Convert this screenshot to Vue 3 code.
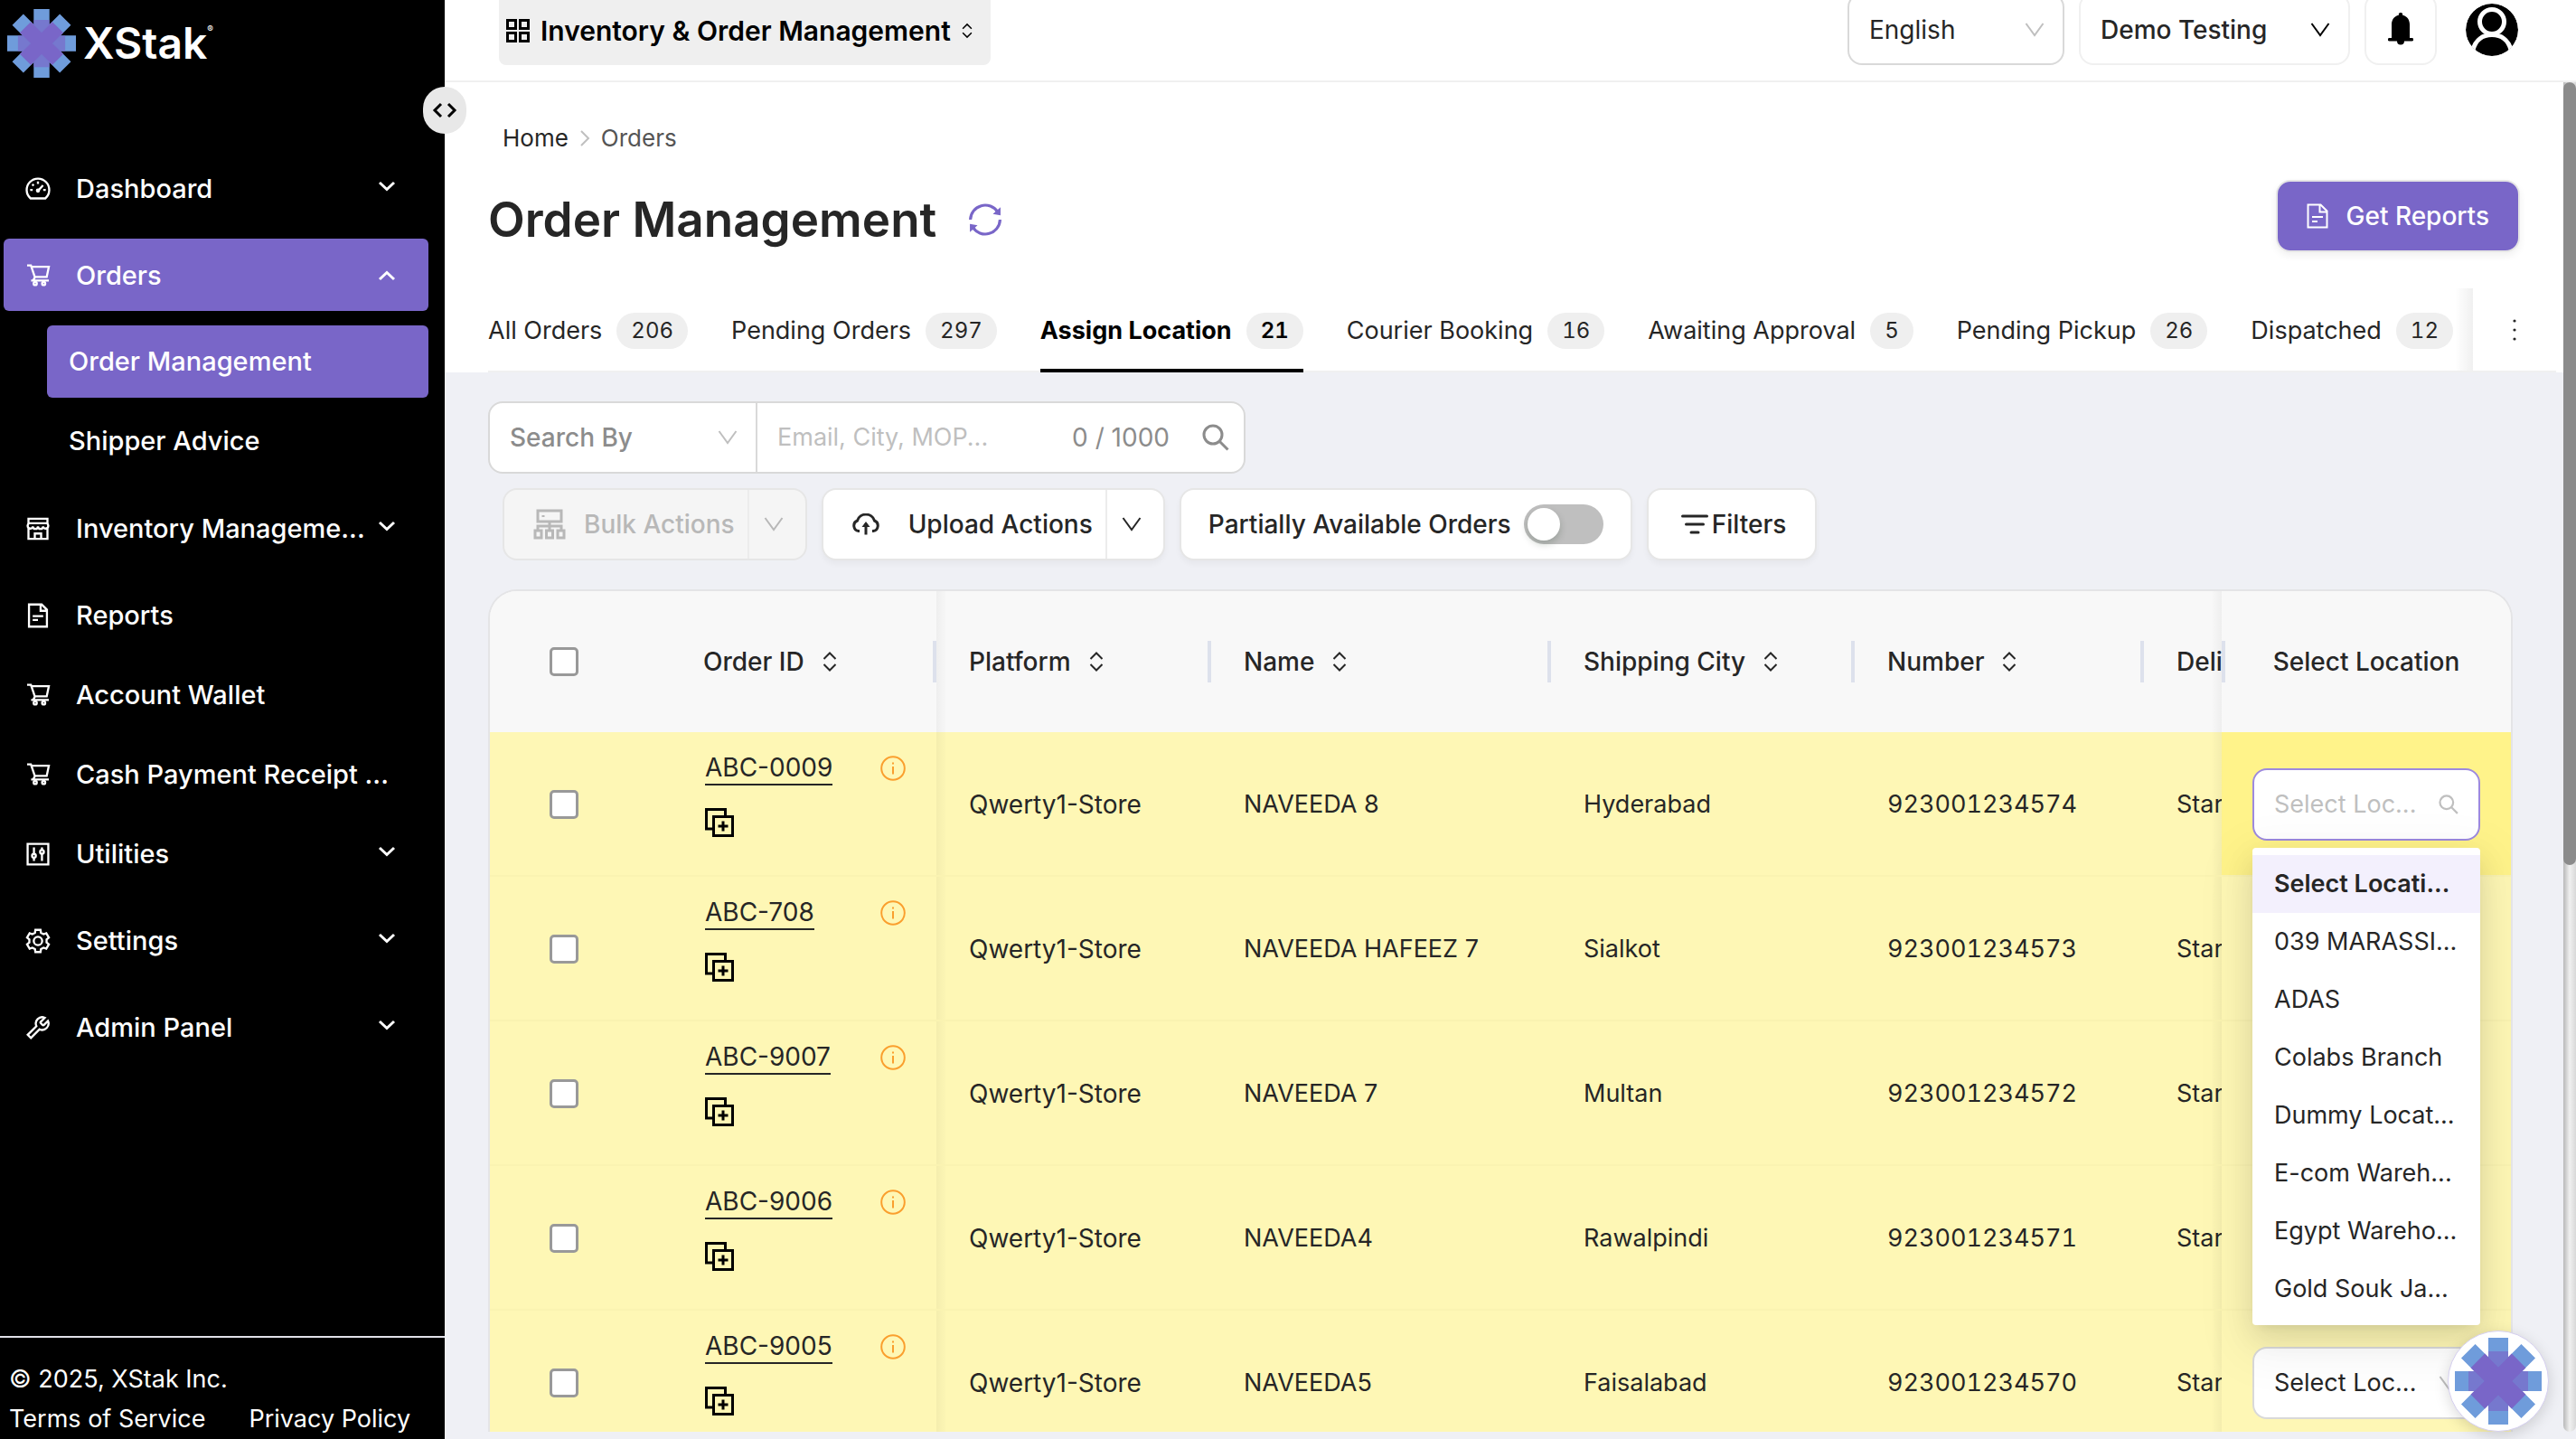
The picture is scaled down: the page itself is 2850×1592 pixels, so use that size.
<template>
  <div class="layout">
    <!-- Icon sprite -->
    <svg class="sprite" aria-hidden="true">
      <symbol id="i-dashboard" viewBox="0 0 24 24">
        <path d="M5 21a10.7 10.7 0 1 1 14 0z M12 5v2.2 M6.6 7.6l1.4 1.4 M4.6 13h2.4 M17 13h2.4 M12.2 13.6l4.6-5" />
        <circle cx="12" cy="13.6" r="1" />
      </symbol>
      <symbol id="i-cart" viewBox="0 0 24 24">
        <path d="M1.7 2.2h3.6L9 13.2h11.3l2-9.6H6 M9.2 13.2l-1.6 3.1 M5.5 16.6h16.8" />
        <circle cx="9.4" cy="19.4" r="1.5" />
        <circle cx="17.4" cy="19.4" r="1.5" />
      </symbol>
      <symbol id="i-shop" viewBox="0 0 24 24">
        <path d="M3 2.5h18v4.2H3z M3 6.7L2.2 9c0 3.6 4.9 3.6 4.9 0.6c0 3.4 4.9 3.4 4.9 0c0 3.4 4.9 3.4 4.9 0c0 3 4.9 3 4.9-0.6L21 6.7 M3 11.8V21.5h18V11.8 M9 21.5v-5h6v5" />
      </symbol>
      <symbol id="i-file" viewBox="0 0 24 24">
        <path d="M3.5 1.5h12l5 5V22.5h-17z M14.5 1.8V7.5h5.8 M7 12.5h10 M7 16.2h5" />
      </symbol>
      <symbol id="i-control" viewBox="0 0 24 24">
        <path d="M2.2 2.2h19.6v19.6H2.2z M8.2 5.5v6.3 M8.2 15.4v3 M15.8 5.5v2.5 M15.8 11.6v6.8" />
        <circle cx="8.2" cy="13.6" r="1.8" />
        <circle cx="15.8" cy="9.8" r="1.8" />
      </symbol>
      <symbol id="i-setting" viewBox="0 0 24 24">
        <path d="M9.57 1.48H14.43L14.84 4.2L17.34 5.64L19.9 4.63L22.33 8.84L20.17 10.56V13.44L22.33 15.16L19.9 19.37L17.34 18.36L14.84 19.8L14.43 22.52H9.57L9.16 19.8L6.66 18.36L4.1 19.37L1.67 15.16L3.83 13.44V10.56L1.67 8.84L4.1 4.63L6.66 5.64L9.16 4.2z" />
        <circle cx="12" cy="12" r="4" />
      </symbol>
      <symbol id="i-tool" viewBox="0 0 24 24">
        <path d="M14.7 6.3a1 1 0 0 0 0 1.4l1.6 1.6a1 1 0 0 0 1.4 0l3.77-3.77a6 6 0 0 1-7.94 7.94L5.3 21.7L2.3 18.7L10.53 10.47a6 6 0 0 1 7.94-7.94l-3.76 3.76z" />
      </symbol>
      <symbol id="i-chevron" viewBox="0 0 20 12"><path d="M2 2l8 7.5l8-7.5" /></symbol>
      <symbol id="i-down" viewBox="0 0 22 16"><path d="M1.5 1l9.5 13l9.5-13" /></symbol>
      <symbol id="i-sort" viewBox="0 0 16 22"><path d="M1.5 8L8 1.5L14.5 8 M1.5 14L8 20.5L14.5 14" /></symbol>
      <symbol id="i-search" viewBox="0 0 30 30">
        <circle cx="12" cy="12" r="10" />
        <path d="M19.5 19.5L28.5 28.5" />
      </symbol>
      <symbol id="i-info" viewBox="0 0 28 28">
        <circle cx="14" cy="14" r="12.8" />
        <path d="M14 12v8.5 M14 7.5v2" />
      </symbol>
      <symbol id="i-copy" viewBox="0 0 32 32">
        <path d="M8 23H1.5V1.5H22.5V8 M9.5 9.5h21v21h-21z M20 14.5v11 M14.5 20h11" />
      </symbol>
      <symbol id="i-logo" viewBox="-48 -48 96 96">
        <path class="arm-outer" d="M-11-48h22v96h-22z M-48-11h96v22h-96z" />
        <path class="arm-inner" d="M-11-33h22v66h-22z M-33-11h66v22h-66z" />
        <path class="arm-outer" transform="rotate(45)" d="M-11-47h22v94h-22z M-47-11h94v22h-94z" />
        <path class="arm-cross" transform="rotate(45)" d="M-11-32h22v64h-22z M-32-11h64v22h-64z" />
      </symbol>
    </svg>

    <aside class="sidebar">
      <a href="#" class="brand">
        <svg class="brand-logo"><use href="#i-logo" /></svg>
        <span class="brand-name">XStak</span><sup class="brand-mark">®</sup>
      </a>
      <nav class="menu">
        <template v-for="item in menu" :key="item.label">
          <a href="#" class="menu-item" :class="{ active: item.active, group: item.group }">
            <svg class="menu-icon"><use :href="'#i-' + item.icon" /></svg>
            <span class="menu-label">{{ item.label }}</span>
            <svg v-if="item.group" class="menu-arrow" :class="{ open: item.active }"><use href="#i-chevron" /></svg>
          </a>
          <div v-if="item.children" class="submenu">
            <a v-for="child in item.children" :key="child" href="#" :class="{ active: child === 'Order Management' }">{{ child }}</a>
          </div>
        </template>
      </nav>
      <footer class="sidebar-footer">
        <div>© 2025, XStak Inc.</div>
        <div class="footer-links">
          <a href="#">Terms of Service</a>
          <a href="#">Privacy Policy</a>
        </div>
      </footer>
      <button class="collapse-btn" aria-label="Toggle sidebar">
        <svg viewBox="0 0 26 18"><path d="M9 2L2 9l7 7 M17 2l7 7l-7 7" /></svg>
      </button>
    </aside>

    <div class="main">
      <header class="topbar">
        <button class="module-btn">
          <svg class="grid-icon" viewBox="0 0 26 26"><path d="M1.5 1.5h9v9h-9z M15.5 1.5h9v9h-9z M1.5 15.5h9v9h-9z M15.5 15.5h9v9h-9z" /></svg>
          Inventory &amp; Order Management
          <svg class="module-sort"><use href="#i-sort" /></svg>
        </button>
        <div class="top-actions">
          <div class="select-box language">
            <select aria-label="Language"><option>English</option></select>
            <svg class="down-icon"><use href="#i-down" /></svg>
          </div>
          <div class="select-box account">
            <select aria-label="Account"><option>Demo Testing</option></select>
            <svg class="down-icon"><use href="#i-down" /></svg>
          </div>
          <button class="bell-btn" aria-label="Notifications">
            <svg viewBox="0 0 28 36"><path d="M14 0a2 2 0 0 1 2 2.8C21.5 4 24 8.5 24 13v15h2.5a1.5 1.5 0 0 1 0 3.5H18a4 4 0 0 1-8 0H1.5a1.5 1.5 0 0 1 0-3.5H4V13C4 8.5 6.5 4 12 2.8A2 2 0 0 1 14 0z" /></svg>
          </button>
          <button class="avatar-btn" aria-label="Profile">
            <svg viewBox="0 0 58 58">
              <circle class="avatar-bg" cx="29" cy="29" r="29" />
              <circle cx="29" cy="20" r="13.5" />
              <path d="M8 51C11 40 19 34.5 29 34.5S47 40 50 51" />
            </svg>
          </button>
        </div>
      </header>

      <div class="viewport">
        <div class="content">
          <section class="page-head">
            <nav class="breadcrumb" aria-label="Breadcrumb">
              <a href="#">Home</a>
              <svg viewBox="0 0 12 18"><path d="M2 1l8 8l-8 8" /></svg>
              <span>Orders</span>
            </nav>
            <div class="title-row">
              <h1>Order Management</h1>
              <button class="refresh-btn" aria-label="Refresh">
                <svg viewBox="0 0 34 34"><path d="M1.5 17A15.5 15.5 0 0 1 30 9 M32.5 17A15.5 15.5 0 0 1 4 25" /><path class="solid" d="M33 4v8.5l-8-1.5z M1 30v-8.5l8 1.5z" /></svg>
              </button>
              <button class="report-btn">
                <svg viewBox="0 0 24 28"><path d="M1.5 1.5h14l7 7V26.5h-21z M14.5 2V9.5h7.5 M6 15h12 M6 20h6" /></svg>
                Get Reports
              </button>
            </div>
            <div class="tabs-row">
              <div class="tabs" role="tablist">
                <button v-for="tab in tabs" :key="tab.label" role="tab" class="tab" :class="{ active: tab.active }">
                  {{ tab.label }}<span class="badge">{{ tab.count }}</span>
                </button>
              </div>
              <button class="more-btn" aria-label="More tabs">
                <svg viewBox="0 0 4 24"><circle cx="2" cy="2" r="1.6" /><circle cx="2" cy="12" r="1.6" /><circle cx="2" cy="22" r="1.6" /></svg>
              </button>
            </div>
          </section>

          <section class="page-body">
            <div class="search-bar">
              <div class="search-by">
                <select aria-label="Search By"><option>Search By</option></select>
                <svg class="down-icon"><use href="#i-down" /></svg>
              </div>
              <input type="text" aria-label="Search" placeholder="Email, City, MOP...">
              <span class="counter">0 / 1000</span>
              <button class="search-btn" aria-label="Run search"><svg><use href="#i-search" /></svg></button>
            </div>

            <div class="toolbar">
              <div class="split-btn disabled">
                <button disabled>
                  <svg class="bulk-icon" viewBox="0 0 36 34"><path d="M5 2h26v12H5z M18 14v5 M5 24v-5h26v5 M18 19v5 M2 24h7v8H2z M14.5 24h7v8h-7z M27 24h7v8h-7z M11 7v2" /></svg>
                  Bulk Actions
                </button>
                <button disabled aria-label="Bulk actions menu"><svg class="down-icon"><use href="#i-down" /></svg></button>
              </div>
              <div class="split-btn">
                <button>
                  <svg class="cloud-icon" viewBox="0 0 30 24"><path d="M8 19.5H7A6 6 0 0 1 5.5 8A10 10 0 0 1 24.5 8A6 6 0 0 1 23 19.5h-1 M15 11v12.5" /><path class="solid" d="M15 9l4.5 6h-9z" /></svg>
                  Upload Actions
                </button>
                <button aria-label="Upload actions menu"><svg class="down-icon"><use href="#i-down" /></svg></button>
              </div>
              <label class="switch-box">
                Partially Available Orders
                <input type="checkbox" role="switch">
              </label>
              <button class="filter-btn">
                <svg viewBox="0 0 30 22"><path d="M1.5 2h27 M5.5 11h19 M11 20h8" /></svg>
                Filters
              </button>
            </div>

            <div class="table-card">
              <table class="orders-table">
                <colgroup>
                  <col class="c-check"><col class="c-order"><col class="c-platform"><col class="c-name">
                  <col class="c-city"><col class="c-number"><col><col class="c-location">
                </colgroup>
                <thead>
                  <tr>
                    <th class="check-cell"><input type="checkbox" aria-label="Select all orders"></th>
                    <th v-for="col in columns" :key="col" :class="{ 'order-cell': col === 'Order ID', 'after-fixed': col === 'Platform' }">
                      <div class="th-inner">
                        {{ col }}
                        <svg class="sort-icon"><use href="#i-sort" /></svg>
                        <span class="separator"></span>
                      </div>
                    </th>
                    <th class="cut-cell">Deli</th>
                    <th class="location-cell">
                      <div class="th-inner"><span class="separator"></span><span class="location-title">Select Location</span></div>
                    </th>
                  </tr>
                </thead>
                <tbody>
                  <tr v-for="(order, i) in orders" :key="order.id">
                    <td class="check-cell"><input type="checkbox" :aria-label="'Select ' + order.id"></td>
                    <td class="order-cell">
                      <div class="order-top">
                        <a href="#">{{ order.id }}</a>
                        <svg class="info-icon"><use href="#i-info" /></svg>
                      </div>
                      <button class="copy-btn" aria-label="Duplicate order"><svg><use href="#i-copy" /></svg></button>
                    </td>
                    <td class="platform-cell after-fixed">Qwerty1-Store</td>
                    <td>{{ order.name }}</td>
                    <td>{{ order.city }}</td>
                    <td class="number-cell">{{ order.number }}</td>
                    <td class="cut-cell">Star</td>
                    <td class="location-cell" :class="{ focused: i === 0 }">
                      <div v-if="i === 0" class="location-select open">
                        <input type="text" role="combobox" aria-expanded="true" aria-label="Search location" placeholder="Select Loc...">
                        <svg class="small-search"><use href="#i-search" /></svg>
                        <ul class="location-menu" role="listbox">
                          <li v-for="(loc, n) in locations" :key="loc" role="option" :class="{ selected: n === 0 }">{{ loc }}</li>
                        </ul>
                      </div>
                      <div v-else class="location-select">
                        <select :aria-label="'Location for ' + order.id"><option>Select Loc...</option></select>
                        <svg class="down-icon"><use href="#i-down" /></svg>
                      </div>
                    </td>
                  </tr>
                </tbody>
              </table>
            </div>
          </section>
        </div>
        <div class="scroll-track"><div class="scroll-thumb"></div></div>
      </div>
    </div>

    <button class="chat-btn" aria-label="Help"><svg><use href="#i-logo" /></svg></button>
  </div>
</template>

<script setup>
import { ref } from 'vue'

const menu = ref([
  { label: 'Dashboard', icon: 'dashboard', group: true },
  { label: 'Orders', icon: 'cart', group: true, active: true, children: ['Order Management', 'Shipper Advice'] },
  { label: 'Inventory Manageme...', icon: 'shop', group: true },
  { label: 'Reports', icon: 'file' },
  { label: 'Account Wallet', icon: 'cart' },
  { label: 'Cash Payment Receipt ...', icon: 'cart' },
  { label: 'Utilities', icon: 'control', group: true },
  { label: 'Settings', icon: 'setting', group: true },
  { label: 'Admin Panel', icon: 'tool', group: true }
])

const tabs = ref([
  { label: 'All Orders', count: 206 },
  { label: 'Pending Orders', count: 297 },
  { label: 'Assign Location', count: 21, active: true },
  { label: 'Courier Booking', count: 16 },
  { label: 'Awaiting Approval', count: 5 },
  { label: 'Pending Pickup', count: 26 },
  { label: 'Dispatched', count: 12 }
])

const columns = ['Order ID', 'Platform', 'Name', 'Shipping City', 'Number']

const orders = ref([
  { id: 'ABC-0009', name: 'NAVEEDA 8', city: 'Hyderabad', number: '923001234574' },
  { id: 'ABC-708', name: 'NAVEEDA HAFEEZ 7', city: 'Sialkot', number: '923001234573' },
  { id: 'ABC-9007', name: 'NAVEEDA 7', city: 'Multan', number: '923001234572' },
  { id: 'ABC-9006', name: 'NAVEEDA4', city: 'Rawalpindi', number: '923001234571' },
  { id: 'ABC-9005', name: 'NAVEEDA5', city: 'Faisalabad', number: '923001234570' }
])

const locations = [
  'Select Locati...', '039 MARASSI...', 'ADAS', 'Colabs Branch',
  'Dummy Locat...', 'E-com Wareh...', 'Egypt Wareho...', 'Gold Souk Ja...'
]
</script>

<style>
body {
  margin: 0;
  background: #eff0f5;
}
</style>

<style scoped>
.layout {
  display: flex;
  height: 100vh;
  overflow: hidden;
  position: relative;
  font-family: Inter, 'Liberation Sans', sans-serif;
  font-size: 28px;
  line-height: 44px;
  color: #262626;
}
.layout *,
.layout *::before {
  box-sizing: border-box;
}
.sprite {
  position: absolute;
  width: 0;
  height: 0;
}
a {
  color: inherit;
  text-decoration: none;
}
button,
select,
input {
  font: inherit;
  color: inherit;
  margin: 0;
  padding: 0;
  border: none;
  background: none;
  outline: none;
}
select {
  appearance: none;
  flex: 1;
  min-width: 0;
}
svg {
  display: block;
  flex: none;
  fill: none;
  stroke: currentColor;
  stroke-width: 2;
}
.solid {
  fill: currentColor;
  stroke: none;
}
.arm-outer {
  fill: #6f9cdb;
  stroke: none;
}
.arm-inner {
  fill: #7966c8;
  fill-opacity: 0.65;
  stroke: none;
}
.arm-cross {
  fill: #7966c8;
  stroke: none;
}

/* SIDEBAR */
.sidebar {
  width: 492px;
  flex: none;
  position: relative;
  display: flex;
  flex-direction: column;
  background: #000;
  color: #fff;
  font-weight: 500;
}
.brand {
  display: flex;
  align-items: center;
  padding: 10px 8px;
  height: 96px;
  margin-bottom: 72px;
}
.brand-logo {
  width: 76px;
  height: 76px;
}
.brand-name {
  margin-left: 8px;
  font-size: 48px;
  font-weight: 600;
}
.brand-mark {
  font-size: 10px;
  line-height: 32px;
  align-self: flex-start;
  padding-top: 6px;
}
.menu {
  display: flex;
  flex-direction: column;
  flex: 1;
  padding: 0 18px 0 4px;
  font-size: 29px;
}
.menu-item {
  display: flex;
  align-items: center;
  height: 80px;
  padding: 2px 36px 0 24px;
  margin-bottom: 8px;
  border-radius: 6px;
  white-space: nowrap;
}
.menu-item.group {
  margin-bottom: 16px;
}
.menu-item.active,
.submenu .active {
  background: #7966c8;
}
.menu-icon {
  width: 28px;
  height: 28px;
  margin-right: 28px;
}
.menu-label {
  flex: 1;
}
.menu-arrow {
  width: 20px;
  height: 12px;
  stroke-width: 3;
  margin-bottom: 6px;
}
.menu-arrow.open {
  transform: rotate(180deg);
  margin-bottom: 0;
}
.submenu {
  padding-left: 48px;
  margin-bottom: 16px;
  display: flex;
  flex-direction: column;
  gap: 8px;
}
.submenu a {
  height: 80px;
  line-height: 80px;
  padding-left: 24px;
  border-radius: 6px;
}
.sidebar-footer {
  border-top: 2px solid #e0e0e8;
  padding: 24px 10px 0;
  font-size: 27px;
  font-weight: 400;
}
.footer-links {
  display: flex;
  gap: 48px;
}
.collapse-btn {
  position: absolute;
  top: 96px;
  right: -24px;
  width: 48px;
  height: 52px;
  border-radius: 24px;
  background: #e8e8e8;
  color: #000;
  display: flex;
  align-items: center;
  justify-content: center;
  z-index: 2;
}
.collapse-btn svg {
  width: 28px;
  height: 18px;
  stroke-width: 3;
}

/* TOP BAR */
.main {
  flex: 1;
  min-width: 0;
  display: flex;
  flex-direction: column;
}
.topbar {
  display: flex;
  justify-content: space-between;
  height: 91px;
  flex: none;
  padding: 0 64px 0 60px;
  background: #fff;
  border-bottom: 2px solid #f0f0f0;
}
.module-btn {
  height: 72px;
  padding: 0 20px 4px 8px;
  display: flex;
  align-items: center;
  background: #efefef;
  border-radius: 0 0 8px 8px;
  color: #000;
  font-size: 30px;
  font-weight: 600;
}
.grid-icon {
  width: 26px;
  height: 26px;
  margin-right: 12px;
  stroke-width: 3;
}
.module-sort {
  width: 12px;
  height: 20px;
  margin-left: 12px;
}
.top-actions {
  display: flex;
  gap: 16px;
  margin-top: -8px;
}
.select-box {
  display: flex;
  align-items: center;
  height: 80px;
  padding: 2px 20px 0 22px;
  border: 2px solid #f0f0f0;
  border-radius: 16px;
}
.select-box.language {
  width: 240px;
  border-color: #d9d9d9;
}
.language .down-icon {
  color: #bfbfbf;
}
.select-box.account {
  width: 300px;
  font-weight: 500;
}
.account .down-icon {
  color: #000;
}
.down-icon {
  width: 22px;
  height: 16px;
}
.bell-btn {
  width: 80px;
  height: 80px;
  border: 2px solid #f0f0f0;
  border-radius: 16px;
  display: flex;
  align-items: center;
  justify-content: center;
}
.bell-btn svg {
  width: 28px;
  height: 36px;
  fill: #000;
  stroke: none;
}
.avatar-btn {
  margin: 12px 0 0 16px;
  align-self: flex-start;
}
.avatar-btn svg {
  width: 58px;
  height: 58px;
  stroke: #fff;
  stroke-width: 5;
  border-radius: 50%;
}
.avatar-bg {
  fill: #000;
  stroke: none;
}

/* PAGE HEAD */
.viewport {
  flex: 1;
  min-height: 0;
  display: flex;
  margin-bottom: 8px;
}
.content {
  flex: 1;
  min-width: 0;
  overflow: hidden;
}
.page-head {
  background: #fff;
  padding: 40px 8px 0 48px;
}
.breadcrumb {
  display: flex;
  align-items: center;
  padding-left: 16px;
  gap: 12px;
  margin-bottom: 24px;
  font-size: 26px;
}
.breadcrumb svg {
  width: 12px;
  height: 18px;
  color: #bfbfbf;
}
.breadcrumb span {
  color: #555;
}
.title-row {
  display: flex;
  align-items: flex-start;
  padding-right: 40px;
  margin-bottom: 32px;
}
.title-row h1 {
  margin: 0;
  font-size: 53px;
  font-weight: 600;
  line-height: 88px;
}
.refresh-btn {
  margin: 26px auto 0 36px;
  color: #7966c8;
}
.refresh-btn svg {
  width: 36px;
  height: 36px;
  stroke-width: 3;
}
.report-btn {
  height: 80px;
  padding: 0 32px;
  display: flex;
  align-items: center;
  gap: 20px;
  color: #fff;
  background: #7966c8;
  border: 2px solid #e6e6e6;
  border-radius: 16px;
  font-weight: 500;
  box-shadow: 0 4px 8px rgba(0, 0, 0, 0.06);
}
.report-btn svg {
  width: 24px;
  height: 28px;
}
.tabs-row {
  display: flex;
  height: 93px;
  border-bottom: 2px solid #f0f0f0;
}
.tabs {
  display: flex;
  flex: 1;
  min-width: 0;
  gap: 48px;
  font-size: 27px;
  background: linear-gradient(to left, rgba(0, 0, 0, 0.06), transparent 20px);
}
.tab {
  height: 93px;
  display: flex;
  align-items: center;
  white-space: nowrap;
}
.tab.active {
  color: #000;
  font-weight: 700;
  border-bottom: 4px solid #000;
  padding-top: 4px;
}
.badge {
  margin-left: 16px;
  padding: 0 16px;
  min-width: 40px;
  height: 40px;
  line-height: 40px;
  border-radius: 20px;
  background: #efefef;
  font-size: 24px;
  font-variant-numeric: tabular-nums;
}
.active .badge {
  font-weight: 600;
}
.more-btn {
  width: 92px;
  display: flex;
  align-items: center;
  justify-content: center;
}
.more-btn svg {
  width: 4px;
  height: 24px;
  fill: #262626;
  stroke: none;
}

/* SEARCH AND TOOLBAR */
.page-body {
  padding: 32px 56px 0 48px;
}
.search-bar {
  display: flex;
  align-items: center;
  width: 838px;
  height: 80px;
  margin-bottom: 16px;
  background: #fff;
  border: 2px solid #d9d9d9;
  border-radius: 16px;
  color: #8c8c8c;
}
.search-by {
  display: flex;
  align-items: center;
  width: 296px;
  height: 100%;
  padding: 0 20px 0 22px;
  border-right: 2px solid #d9d9d9;
  font-weight: 500;
}
.search-by .down-icon {
  color: #bfbfbf;
}
.search-bar input {
  flex: 1;
  min-width: 0;
  padding-left: 22px;
  font-size: 27px;
}
.search-bar input::placeholder,
.location-select input::placeholder {
  color: #bfbfbf;
  opacity: 1;
}
.search-btn {
  margin: 0 16px 0 36px;
}
.search-btn svg {
  width: 30px;
  height: 30px;
  stroke-width: 3;
}
.toolbar {
  display: flex;
  gap: 16px;
  padding-left: 16px;
  margin-bottom: 32px;
  font-weight: 500;
}
.split-btn,
.switch-box,
.filter-btn {
  display: flex;
  align-items: center;
  height: 80px;
  background: #fff;
  border: 2px solid #e6e6e6;
  border-radius: 16px;
  box-shadow: 0 4px 6px rgba(0, 0, 0, 0.04);
}
.split-btn button {
  height: 100%;
  display: flex;
  align-items: center;
}
.split-btn button:first-child {
  padding: 0 14px 0 32px;
  border-right: 2px solid #ececec;
}
.split-btn button:last-child {
  padding: 0 24px 0 16px;
}
.split-btn.disabled {
  background: #f5f5f5;
  color: #b8b8b8;
  box-shadow: none;
}
.bulk-icon {
  width: 36px;
  height: 34px;
  margin-right: 20px;
  stroke-width: 3;
}
.cloud-icon {
  width: 30px;
  height: 24px;
  margin-right: 32px;
  stroke-width: 3;
}
.switch-box {
  padding: 0 30px;
  gap: 14px;
}
.switch-box input {
  appearance: none;
  width: 88px;
  height: 44px;
  padding: 4px;
  border-radius: 22px;
  background: #bfbfbf;
}
.switch-box input::before {
  content: '';
  display: block;
  width: 36px;
  height: 36px;
  border-radius: 50%;
  background: #fff;
  box-shadow: 0 4px 8px rgba(0, 35, 11, 0.2);
}
.filter-btn {
  padding: 0 32px 0 36px;
  gap: 4px;
}
.filter-btn svg {
  width: 30px;
  height: 22px;
  stroke-width: 3;
  stroke-linecap: round;
}

/* TABLE */
.table-card {
  border: 2px solid #e4e4e6;
  border-bottom: none;
  border-radius: 32px 32px 0 0;
  overflow: hidden;
  background: #f8f8f8;
}
.orders-table {
  width: 100%;
  table-layout: fixed;
  border-collapse: separate;
  border-spacing: 0;
}
.c-check { width: 164px; }
.c-order { width: 330px; }
.c-platform { width: 304px; }
.c-name { width: 376px; }
.c-city { width: 336px; }
.c-number { width: 320px; }
.c-location { width: 320px; }
th,
td {
  padding: 0 0 0 36px;
  text-align: left;
  white-space: nowrap;
}
th {
  height: 156px;
  font-weight: 500;
  background: #f8f8f8;
}
td {
  height: 160px;
  background: #fef7b5;
  box-shadow: inset 0 -2px #faf3b1;
  font-size: 27px;
}
.platform-cell,
td.order-cell {
  font-size: 28px;
}
.number-cell {
  font-variant-numeric: tabular-nums;
}
.th-inner {
  display: flex;
  align-items: center;
}
.sort-icon {
  width: 16px;
  height: 22px;
  margin-left: 20px;
}
.separator {
  width: 4px;
  height: 46px;
  margin-left: auto;
  background: #dde1ec;
}
.check-cell {
  padding: 0;
  text-align: center;
}
.check-cell input {
  appearance: none;
  display: block;
  width: 32px;
  height: 32px;
  margin: 0 auto;
  border: 3px solid #999;
  border-radius: 5px;
  background: #fff;
}
.order-cell {
  padding-left: 72px;
}
td.order-cell {
  vertical-align: top;
  padding: 18px 0 0 74px;
}
.order-top {
  display: flex;
  justify-content: space-between;
  align-items: center;
  padding-right: 34px;
  height: 44px;
  margin-bottom: 22px;
}
.order-top a {
  line-height: 36px;
  border-bottom: 2px solid #262626;
}
.info-icon {
  width: 28px;
  height: 28px;
  color: #fa9f2e;
}
.copy-btn {
  display: block;
  color: #000;
}
.copy-btn svg {
  width: 32px;
  height: 32px;
  stroke-width: 3;
}
.after-fixed {
  background-image: linear-gradient(to right, rgba(0, 0, 0, 0.04), transparent 12px);
}
.cut-cell {
  overflow: hidden;
  background-image: linear-gradient(to left, rgba(0, 0, 0, 0.04), transparent 12px);
}
th.location-cell {
  padding: 0;
}
.location-cell .separator {
  margin: 0;
}
.location-title {
  flex: 1;
  padding-right: 4px;
  text-align: center;
}
td.location-cell {
  padding: 0 34px;
}
td.focused {
  background: #fff38a;
}
.location-select {
  position: relative;
  display: flex;
  align-items: center;
  height: 80px;
  padding: 0 22px;
  background: #fff;
  border: 2px solid #d9d9d9;
  border-radius: 16px;
}
.location-select.open {
  border-color: #9d8ade;
}
.location-select input {
  flex: 1;
  min-width: 0;
}
.location-select .down-icon,
.small-search {
  color: #bfbfbf;
}
.small-search {
  width: 22px;
  height: 22px;
  stroke-width: 3;
}
.location-menu {
  position: absolute;
  top: 86px;
  left: -2px;
  right: -2px;
  z-index: 3;
  margin: 0;
  padding: 8px 0;
  list-style: none;
  background: #fff;
  border-radius: 4px;
  box-shadow: 0 6px 12px -8px rgba(0, 0, 0, 0.12), 0 12px 32px rgba(0, 0, 0, 0.1), 0 18px 56px 16px rgba(0, 0, 0, 0.05);
}
.location-menu li {
  height: 64px;
  line-height: 64px;
  padding-left: 24px;
}
.location-menu .selected {
  background: #f3f0fd;
  font-weight: 600;
}

/* SCROLLBAR AND HELP BUTTON */
.scroll-track {
  width: 14px;
  flex: none;
  border-radius: 0 0 7px 7px;
  background: linear-gradient(to right, #b8b8b8, #f0f0f0 50%, #d8d8d8);
}
.scroll-thumb {
  height: 58%;
  border-radius: 7px;
  background: #8b8b8b;
}
.chat-btn {
  position: absolute;
  right: 30px;
  bottom: 8px;
  z-index: 4;
  width: 112px;
  height: 112px;
  display: flex;
  align-items: center;
  justify-content: center;
  background: #fff;
  border: 1px solid #d5cfef;
  border-radius: 50%;
  box-shadow: 0 4px 16px rgba(0, 0, 0, 0.15);
}
.chat-btn svg {
  width: 96px;
  height: 96px;
}
</style>
